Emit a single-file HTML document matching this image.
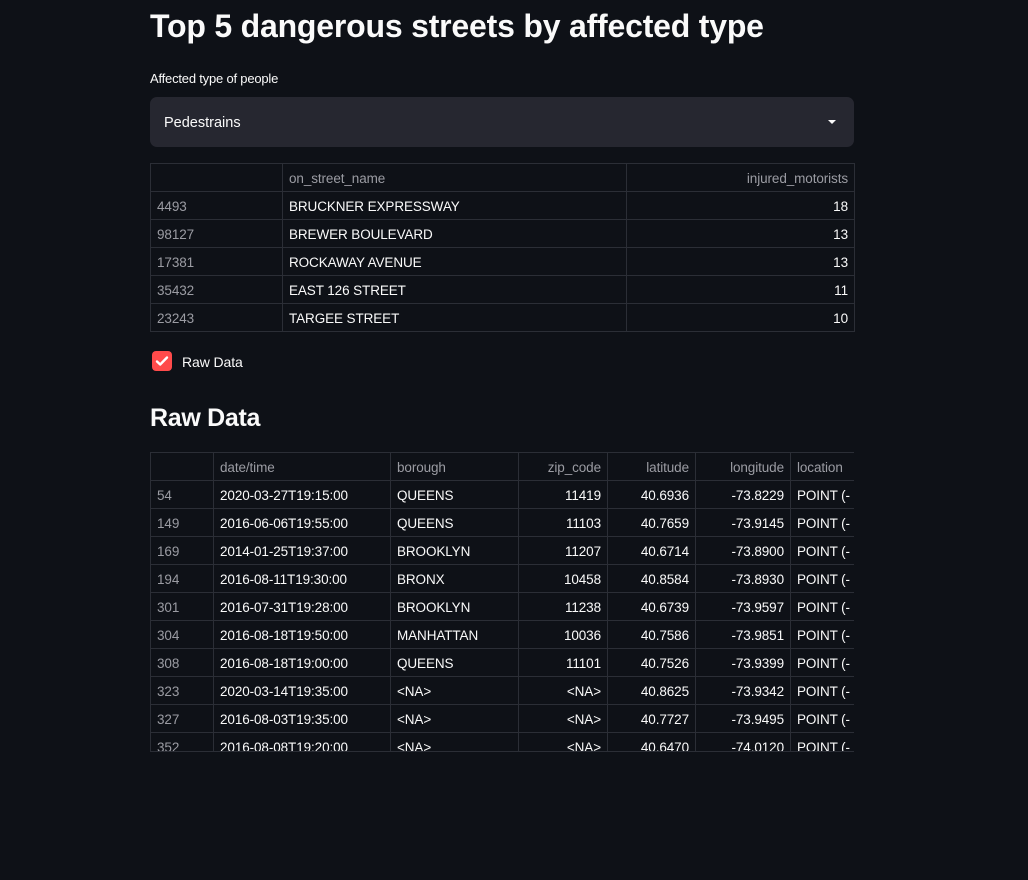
<!DOCTYPE html>
<html><head><meta charset="utf-8"><style>
*{margin:0;padding:0;box-sizing:border-box}
body{width:1028px;height:880px;background:#0e1117;color:#fafafa;font-family:"Liberation Sans",sans-serif;position:relative;overflow:hidden}
.abs{position:absolute}
h1{position:absolute;left:150px;top:5px;font-size:32px;font-weight:bold;letter-spacing:-0.2px;white-space:nowrap;line-height:42px}
h2{position:absolute;left:150px;top:402px;font-size:25px;font-weight:bold;letter-spacing:-0.3px;line-height:32px}
.lbl{left:150px;top:71px;font-size:13px;letter-spacing:-0.2px}
.sel{left:150px;top:97px;width:704px;height:50px;background:#262730;border-radius:7px;font-size:14.5px;padding:17px 14px;line-height:18px}
.arrow{position:absolute;right:18px;top:23px;border-left:4px solid transparent;border-right:4px solid transparent;border-top:4px solid #fafafa}
table{position:absolute;border-collapse:collapse;font-size:13.5px;table-layout:fixed;letter-spacing:-0.1px}
td,th{border:1px solid #2b2e36;height:28px;padding:2px 6px 0;white-space:nowrap;overflow:hidden;font-weight:normal}
th{color:#9b9ca3;text-align:left}
td.i{color:#9b9ca3}
.r{text-align:right}
.cb{left:152px;top:351px;width:20px;height:20px;background:#ff4b4b;border-radius:4px}
.cbl{left:182px;top:354px;font-size:14px;letter-spacing:-0.1px}
.wrap{position:absolute;left:150px;top:451px;width:704px;height:301px;overflow:hidden}
</style></head><body>
<h1>Top 5 dangerous streets by affected type</h1>
<div class="abs lbl">Affected type of people</div>
<div class="abs sel">Pedestrains<span class="arrow"></span></div>
<table style="left:150px;top:163px;width:704px">
<colgroup><col style="width:132px"><col style="width:344px"><col style="width:228px"></colgroup>
<tr><th></th><th>on_street_name</th><th class="r">injured_motorists</th></tr>
<tr><td class="i">4493</td><td>BRUCKNER EXPRESSWAY</td><td class="r">18</td></tr>
<tr><td class="i">98127</td><td>BREWER BOULEVARD</td><td class="r">13</td></tr>
<tr><td class="i">17381</td><td>ROCKAWAY AVENUE</td><td class="r">13</td></tr>
<tr><td class="i">35432</td><td>EAST 126 STREET</td><td class="r">11</td></tr>
<tr><td class="i">23243</td><td>TARGEE STREET</td><td class="r">10</td></tr>
</table>
<div class="abs cb"><svg width="20" height="20" viewBox="0 0 20 20"><path d="M5 10.5l3.2 3L15 6.5" stroke="#fff" stroke-width="2.4" fill="none" stroke-linecap="round" stroke-linejoin="round"/></svg></div>
<div class="abs cbl">Raw Data</div>
<h2>Raw Data</h2>
<div class="wrap">
<table style="left:0;top:1px;width:720px">
<colgroup><col style="width:63px"><col style="width:177px"><col style="width:128px"><col style="width:89px"><col style="width:88px"><col style="width:95px"><col style="width:80px"></colgroup>
<tr><th></th><th>date/time</th><th>borough</th><th class="r">zip_code</th><th class="r">latitude</th><th class="r">longitude</th><th>location</th></tr>
<tr><td class="i">54</td><td>2020-03-27T19:15:00</td><td>QUEENS</td><td class="r">11419</td><td class="r">40.6936</td><td class="r">-73.8229</td><td>POINT (-</td></tr>
<tr><td class="i">149</td><td>2016-06-06T19:55:00</td><td>QUEENS</td><td class="r">11103</td><td class="r">40.7659</td><td class="r">-73.9145</td><td>POINT (-</td></tr>
<tr><td class="i">169</td><td>2014-01-25T19:37:00</td><td>BROOKLYN</td><td class="r">11207</td><td class="r">40.6714</td><td class="r">-73.8900</td><td>POINT (-</td></tr>
<tr><td class="i">194</td><td>2016-08-11T19:30:00</td><td>BRONX</td><td class="r">10458</td><td class="r">40.8584</td><td class="r">-73.8930</td><td>POINT (-</td></tr>
<tr><td class="i">301</td><td>2016-07-31T19:28:00</td><td>BROOKLYN</td><td class="r">11238</td><td class="r">40.6739</td><td class="r">-73.9597</td><td>POINT (-</td></tr>
<tr><td class="i">304</td><td>2016-08-18T19:50:00</td><td>MANHATTAN</td><td class="r">10036</td><td class="r">40.7586</td><td class="r">-73.9851</td><td>POINT (-</td></tr>
<tr><td class="i">308</td><td>2016-08-18T19:00:00</td><td>QUEENS</td><td class="r">11101</td><td class="r">40.7526</td><td class="r">-73.9399</td><td>POINT (-</td></tr>
<tr><td class="i">323</td><td>2020-03-14T19:35:00</td><td>&lt;NA&gt;</td><td class="r">&lt;NA&gt;</td><td class="r">40.8625</td><td class="r">-73.9342</td><td>POINT (-</td></tr>
<tr><td class="i">327</td><td>2016-08-03T19:35:00</td><td>&lt;NA&gt;</td><td class="r">&lt;NA&gt;</td><td class="r">40.7727</td><td class="r">-73.9495</td><td>POINT (-</td></tr>
<tr><td class="i">352</td><td>2016-08-08T19:20:00</td><td>&lt;NA&gt;</td><td class="r">&lt;NA&gt;</td><td class="r">40.6470</td><td class="r">-74.0120</td><td>POINT (-</td></tr>
</table>
</div>
<div class="abs" style="left:150px;top:751px;width:704px;height:1px;background:#2b2e36"></div>
</body></html>
